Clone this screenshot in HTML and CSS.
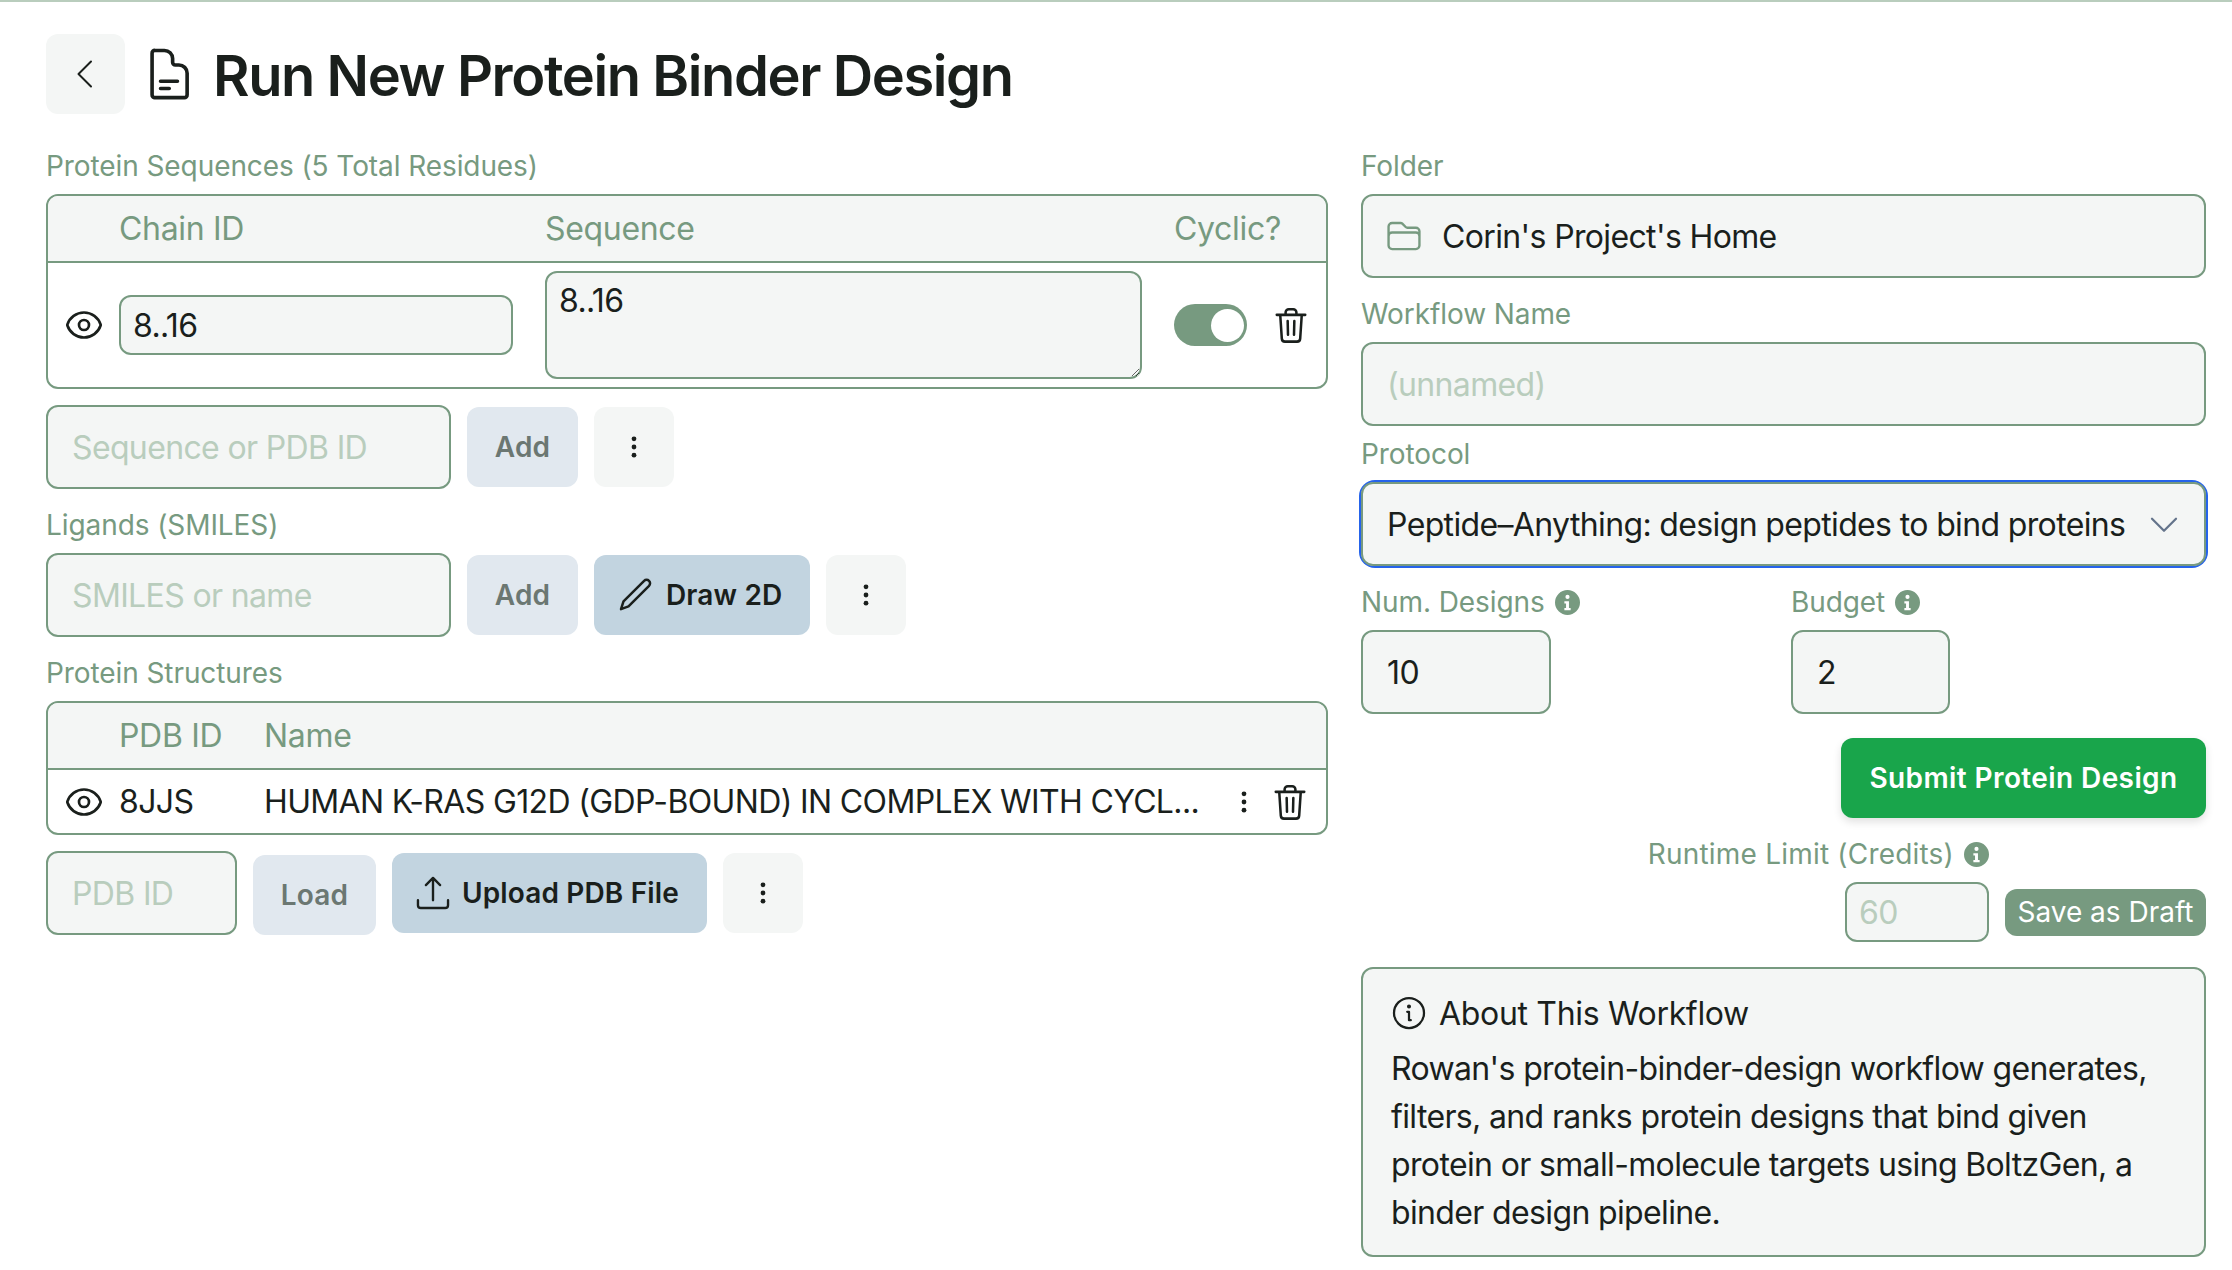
FILE: index.html
```html
<!DOCTYPE html>
<html lang="en">
<head>
  <meta charset="UTF-8" />
  <meta name="viewport" content="width=device-width, initial-scale=1.0" />
  <title>Run New Protein Binder Design</title>
  <link rel="stylesheet" href="styles.css">
</head>
<body>
  <svg class="sprite" width="0" height="0" aria-hidden="true">
    <symbol id="eye" viewBox="0 0 24 24"><path d="M2.04 12.32a1 1 0 0 1 0-.64C3.42 7.5 7.36 4.5 12 4.5c4.64 0 8.57 3 9.96 7.18a1 1 0 0 1 0 .64C20.58 16.49 16.64 19.5 12 19.5c-4.64 0-8.57-3-9.96-7.18Z"/><path d="M15 12a3 3 0 1 1-6 0 3 3 0 0 1 6 0Z"/></symbol>
    <symbol id="trash" viewBox="0 0 24 24"><path d="M3 5.6h18M5.2 5.6l1 15a2 2 0 0 0 2 1.9h7.6a2 2 0 0 0 2-1.9l1-15M8.6 5.4V4a2 2 0 0 1 2-2h2.8a2 2 0 0 1 2 2v1.4M9.9 9.5l.2 8.6M14.1 9.5l-.2 8.6"/></symbol>
    <symbol id="dots" viewBox="0 0 24 24"><circle cx="12" cy="4.4" r="2.2"/><circle cx="12" cy="12" r="2.2"/><circle cx="12" cy="19.6" r="2.2"/></symbol>
    <symbol id="info" viewBox="0 0 24 24"><path fill-rule="evenodd" d="M12 0a12 12 0 1 1 0 24 12 12 0 0 1 0-24Zm0 4.6a2 2 0 1 0 0 4 2 2 0 0 0 0-4Zm-3 6.2v2.2h1.6v4.2H9v2.2h6v-2.2h-1.6v-6.4H9Z"/></symbol>
  </svg>

  <header class="page-header">
    <button class="back-btn" type="button">
      <svg width="40" height="40" viewBox="0 0 24 24" class="line-icon thin"><path d="M15 4.5 7.5 12l7.5 7.5"/></svg>
    </button>
    <svg width="58" height="58" viewBox="0 0 24 24" class="line-icon doc-icon"><path d="M19.5 14.25v-2.6a3.4 3.4 0 0 0-3.4-3.4h-1.5a1.1 1.1 0 0 1-1.1-1.1V5.6a3.4 3.4 0 0 0-3.4-3.35H6.2A1.1 1.1 0 0 0 5 3.4v17.2a1.1 1.1 0 0 0 1.2 1.15h12.1a1.1 1.1 0 0 0 1.2-1.15v-6.35ZM8.5 15h7M8.5 18h3.6"/></svg>
    <h1>Run New Protein Binder Design</h1>
  </header>

  <div class="layout">
    <section class="col-left">
      <label class="field-label">Protein Sequences (5 Total Residues)</label>
      <div class="table-box seq-table">
        <div class="table-head seq-grid">
          <span></span><span>Chain ID</span><span>Sequence</span><span class="cyclic-head">Cyclic?</span>
        </div>
        <div class="seq-grid seq-row">
          <svg class="line-icon eye-icon"><use href="#eye"/></svg>
          <input class="input chain-input" type="text" value="8..16" />
          <textarea class="input seq-input">8..16</textarea>
          <div class="toggle"><span class="knob"></span></div>
          <svg class="line-icon trash-icon"><use href="#trash"/></svg>
        </div>
      </div>
      <div class="input-row">
        <input class="input wide-input" type="text" placeholder="Sequence or PDB ID" />
        <button class="btn btn-muted" type="button">Add</button>
        <button class="btn btn-dots" type="button"><svg class="dots-icon"><use href="#dots"/></svg></button>
      </div>

      <label class="field-label">Ligands (SMILES)</label>
      <div class="input-row">
        <input class="input wide-input" type="text" placeholder="SMILES or name" />
        <button class="btn btn-muted" type="button">Add</button>
        <button class="btn btn-blue" type="button">
          <svg width="40" height="40" viewBox="0 0 24 24" class="line-icon"><path d="M16.86 3.49a2.1 2.1 0 1 1 2.97 2.97L7.5 18.8l-4.5 1.7 1.5-4.7L16.86 3.49Z"/></svg>
          Draw 2D
        </button>
        <button class="btn btn-dots" type="button"><svg class="dots-icon"><use href="#dots"/></svg></button>
      </div>

      <label class="field-label">Protein Structures</label>
      <div class="table-box">
        <div class="table-head pdb-grid">
          <span></span><span>PDB ID</span><span>Name</span>
        </div>
        <div class="pdb-grid pdb-row">
          <svg class="line-icon eye-icon"><use href="#eye"/></svg>
          <span>8JJS</span>
          <span class="pdb-name">HUMAN K-RAS G12D (GDP-BOUND) IN COMPLEX WITH CYCL...</span>
          <svg class="dots-icon"><use href="#dots"/></svg>
          <svg class="line-icon trash-icon"><use href="#trash"/></svg>
        </div>
      </div>
      <div class="input-row pdb-load">
        <input class="input pdb-input" type="text" placeholder="PDB ID" />
        <button class="btn btn-muted btn-load" type="button">Load</button>
        <button class="btn btn-blue" type="button">
          <svg width="38" height="38" viewBox="0 0 24 24" class="line-icon"><path d="M2.5 16.5v3.2c0 1 .8 1.8 1.8 1.8h15.4c1 0 1.8-.8 1.8-1.8v-3.2M12 16.5V2.5M7.5 7 12 2.5 16.5 7"/></svg>
          Upload PDB File
        </button>
        <button class="btn btn-dots" type="button"><svg class="dots-icon"><use href="#dots"/></svg></button>
      </div>
    </section>

    <section class="col-right">
      <label class="field-label">Folder</label>
      <div class="input folder-box">
        <svg width="38" height="38" viewBox="0 0 24 24" class="line-icon folder-icon"><path d="M2.25 12.75V12c0-1.2 1-2.25 2.25-2.25h15c1.25 0 2.25 1.05 2.25 2.25v.75m-8.69-6.44-2.12-2.12a1.5 1.5 0 0 0-1.06-.44H4.5A2.25 2.25 0 0 0 2.25 6v12a2.25 2.25 0 0 0 2.25 2.25h15A2.25 2.25 0 0 0 21.75 18V9a2.25 2.25 0 0 0-2.25-2.25h-5.38c-.4 0-.78-.16-1.06-.44Z"/></svg>
        <span>Corin's Project's Home</span>
      </div>

      <label class="field-label name-label">Workflow Name</label>
      <input class="input full-input" type="text" placeholder="(unnamed)" />

      <label class="field-label protocol-label">Protocol</label>
      <div class="select-wrap">
        <select class="input protocol-select">
          <option>Peptide–Anything: design peptides to bind proteins</option>
        </select>
        <svg width="36" height="36" viewBox="0 0 24 24" class="line-icon chevron"><path d="m4 8.5 8 8 8-8"/></svg>
      </div>

      <div class="num-row">
        <div class="num-field">
          <label class="field-label">Num. Designs<svg class="info-icon"><use href="#info"/></svg></label>
          <input class="input num-input" type="text" value="10" />
        </div>
        <div class="budget-field">
          <label class="field-label">Budget<svg class="info-icon"><use href="#info"/></svg></label>
          <input class="input budget-input" type="text" value="2" />
        </div>
      </div>

      <div class="submit-row">
        <button class="btn-submit" type="button">Submit Protein Design</button>
      </div>

      <div class="runtime-block">
        <label class="field-label runtime-label">Runtime Limit (Credits)<svg class="info-icon"><use href="#info"/></svg></label>
        <div class="runtime-row">
          <input class="input runtime-input" type="text" placeholder="60" />
          <button class="btn-draft" type="button">Save as Draft</button>
        </div>
      </div>

      <div class="about-box">
        <h3>
          <svg width="36" height="36" viewBox="0 0 24 24" class="line-icon"><circle cx="12" cy="12" r="10"/><path d="M10.8 11.2h1.2v5.6h1.2"/><circle class="dot" cx="12" cy="7.6" r=".6"/></svg>
          About This Workflow
        </h3>
        <p>Rowan's protein-binder-design workflow generates, filters, and ranks protein designs that bind given protein or small-molecule targets using BoltzGen, a binder design pipeline.</p>
      </div>
    </section>
  </div>
</body>
</html>
```

FILE: styles.css
```css
* {
  box-sizing: border-box;
}
body {
  margin: 0;
  height: 1270px;
  overflow: hidden;
  background: #fff;
  border-top: 2px solid #b9cdbd;
  font-family: Inter, "Noto Sans", sans-serif;
  font-size: 32px;
  letter-spacing: -0.02em;
  color: #1a1f1c;
}
.sprite {
  position: absolute;
}
.line-icon {
  fill: none;
  stroke: currentColor;
  stroke-width: 1.5;
  stroke-linecap: round;
  stroke-linejoin: round;
  flex: none;
}
.line-icon.thin {
  stroke-width: 1.2;
}
.page-header {
  display: flex;
  align-items: center;
  height: 80px;
  margin: 32px 0 32px 46px;
}
.back-btn {
  width: 79px;
  height: 80px;
  padding: 0;
  border: none;
  border-radius: 12px;
  background: #f4f6f5;
  color: #1a1f1c;
  display: flex;
  align-items: center;
  justify-content: center;
}
.doc-icon {
  margin-left: 15px;
}
h1 {
  margin: 3px 0 0 15px;
  font-size: 56px;
  font-weight: 600;
  letter-spacing: -0.025em;
  line-height: 1;
}
.layout {
  display: grid;
  grid-template-columns: 1282px 845px;
  column-gap: 33px;
  margin-left: 46px;
}
.field-label {
  display: flex;
  align-items: center;
  gap: 10px;
  height: 40px;
  margin-bottom: 8px;
  font-size: 28px;
  letter-spacing: -0.003em;
  color: #779a80;
  white-space: pre;
}
.input {
  border: 2px solid #779a80;
  border-radius: 12px;
  background: #f4f6f5;
  font-family: inherit;
  font-size: 32px;
  letter-spacing: -0.02em;
  color: #1a1f1c;
  padding: 0 24px;
  height: 84px;
  outline: none;
}
.input::placeholder {
  color: #b9cdbd;
  opacity: 1;
}
.table-box {
  border: 2px solid #779a80;
  border-radius: 12px;
  overflow: hidden;
  margin-bottom: 16px;
}
.table-head {
  height: 67px;
  background: #f4f6f5;
  border-bottom: 2px solid #779a80;
  color: #779a80;
  font-size: 32px;
  letter-spacing: -0.01em;
  align-items: center;
}
.seq-grid {
  display: grid;
  grid-template-columns: 71px 426px 597px 1fr;
  column-gap: 0;
}
.cyclic-head {
  padding-left: 32px;
}
.seq-row {
  height: 124px;
  align-items: center;
  position: relative;
  grid-template-columns: 71px 394px 32px 597px 32px 73px 1fr;
}
.seq-row .eye-icon {
  margin-left: 16px;
}
.seq-row .chain-input {
  width: 394px;
  height: 60px;
  padding: 0 12px;
  grid-column: 2;
}
.seq-row .seq-input {
  grid-column: 4;
  width: 597px;
  height: 108px;
  padding: 10px 12px;
  line-height: 36px;
}
.seq-row .toggle {
  grid-column: 6;
}
.seq-row .trash-icon {
  grid-column: 7;
  margin-left: 25px;
}
.eye-icon {
  width: 40px;
  height: 40px;
  stroke-width: 1.6;
}
.trash-icon {
  width: 38px;
  height: 38px;
  stroke-width: 1.6;
}
.dots-icon {
  width: 26px;
  height: 26px;
  fill: #1a1f1c;
  flex: none;
}
.toggle {
  width: 73px;
  height: 42px;
  border-radius: 21px;
  background: #779a80;
  display: flex;
  align-items: center;
  justify-content: flex-end;
  padding-right: 3px;
}
.knob {
  width: 33px;
  height: 33px;
  border-radius: 50%;
  background: #fff;
}
.input-row {
  display: flex;
  align-items: center;
  gap: 16px;
  margin-bottom: 16px;
}
.wide-input {
  width: 405px;
}
.btn {
  display: flex;
  align-items: center;
  justify-content: center;
  height: 80px;
  border: none;
  border-radius: 12px;
  font-family: inherit;
  font-size: 28px;
  font-weight: 600;
  letter-spacing: 0.005em;
  padding: 0;
}
.btn-muted {
  width: 111px;
  background: #e1e8ef;
  color: #6b7772;
}
.btn-dots {
  width: 80px;
  background: #f4f6f5;
}
.btn-blue {
  background: #c2d4e0;
  color: #1a1f1c;
  padding: 0 28px 0 22px;
  gap: 10px;
}
.pdb-grid {
  display: grid;
  grid-template-columns: 71px 145px 1fr;
}
.pdb-row {
  height: 63px;
  align-items: center;
  grid-template-columns: 71px 145px 940px 1fr 64px;
  white-space: nowrap;
}
.pdb-row .eye-icon {
  margin-left: 16px;
}
.pdb-row .dots-icon {
  margin-left: 27px;
}
.pdb-row .trash-icon {
  margin-left: 9px;
}
.pdb-input {
  width: 191px;
}
.btn-load {
  width: 123px;
  margin-top: 4px;
}
.full-input {
  display: block;
  width: 100%;
}
.folder-box {
  display: flex;
  align-items: center;
  gap: 19px;
  margin-bottom: 16px;
}
.folder-icon {
  color: #779a80;
  margin: 0 0 0 -2px;
}
.protocol-label {
  margin-top: 8px;
}
.select-wrap {
  position: relative;
  height: 84px;
  border-radius: 14px;
  box-shadow: 0 0 0 2px #2563eb;
  margin-bottom: 16px;
}
.protocol-select {
  width: 100%;
  appearance: none;
}
.chevron {
  position: absolute;
  right: 24px;
  top: 24px;
  color: #64748b;
}
.num-row {
  display: flex;
  margin-bottom: 24px;
}
.num-field {
  width: 430px;
}
.num-input {
  width: 190px;
  display: block;
}
.budget-input {
  width: 159px;
  display: block;
}
.info-icon {
  width: 25px;
  height: 25px;
  fill: #779a80;
}
.submit-row {
  display: flex;
  justify-content: flex-end;
  margin-bottom: 16px;
}
.btn-submit {
  width: 365px;
  height: 80px;
  border: none;
  border-radius: 12px;
  background: #19a54b;
  color: #fff;
  font-family: inherit;
  font-size: 28px;
  font-weight: 600;
  letter-spacing: 0.4px;
  box-shadow: 0 4px 8px rgba(0, 0, 0, 0.12);
}
.runtime-block {
  display: flex;
  flex-direction: column;
  align-items: flex-end;
  margin-bottom: 25px;
}
.runtime-label {
  margin-right: 217px;
  letter-spacing: 0.2px;
}
.runtime-row {
  display: flex;
  align-items: center;
  gap: 16px;
}
.runtime-input {
  width: 144px;
  height: 60px;
  padding: 0 12px;
}
.btn-draft {
  width: 201px;
  height: 47px;
  border: none;
  border-radius: 12px;
  background: #779a80;
  color: #fff;
  font-family: inherit;
  font-size: 28px;
  padding: 0;
}
.about-box {
  height: 290px;
  padding: 24px 28px;
  background: #f4f6f5;
  border: 2px solid #779a80;
  border-radius: 12px;
}
.about-box h3 {
  display: flex;
  align-items: center;
  gap: 12px;
  margin: 0;
  height: 40px;
  font-size: 32px;
  font-weight: 400;
  letter-spacing: -0.01em;
}
.about-box .dot {
  fill: currentColor;
}
.about-box p {
  margin: 12px 0 0;
  font-size: 32px;
  line-height: 48px;
}
```
